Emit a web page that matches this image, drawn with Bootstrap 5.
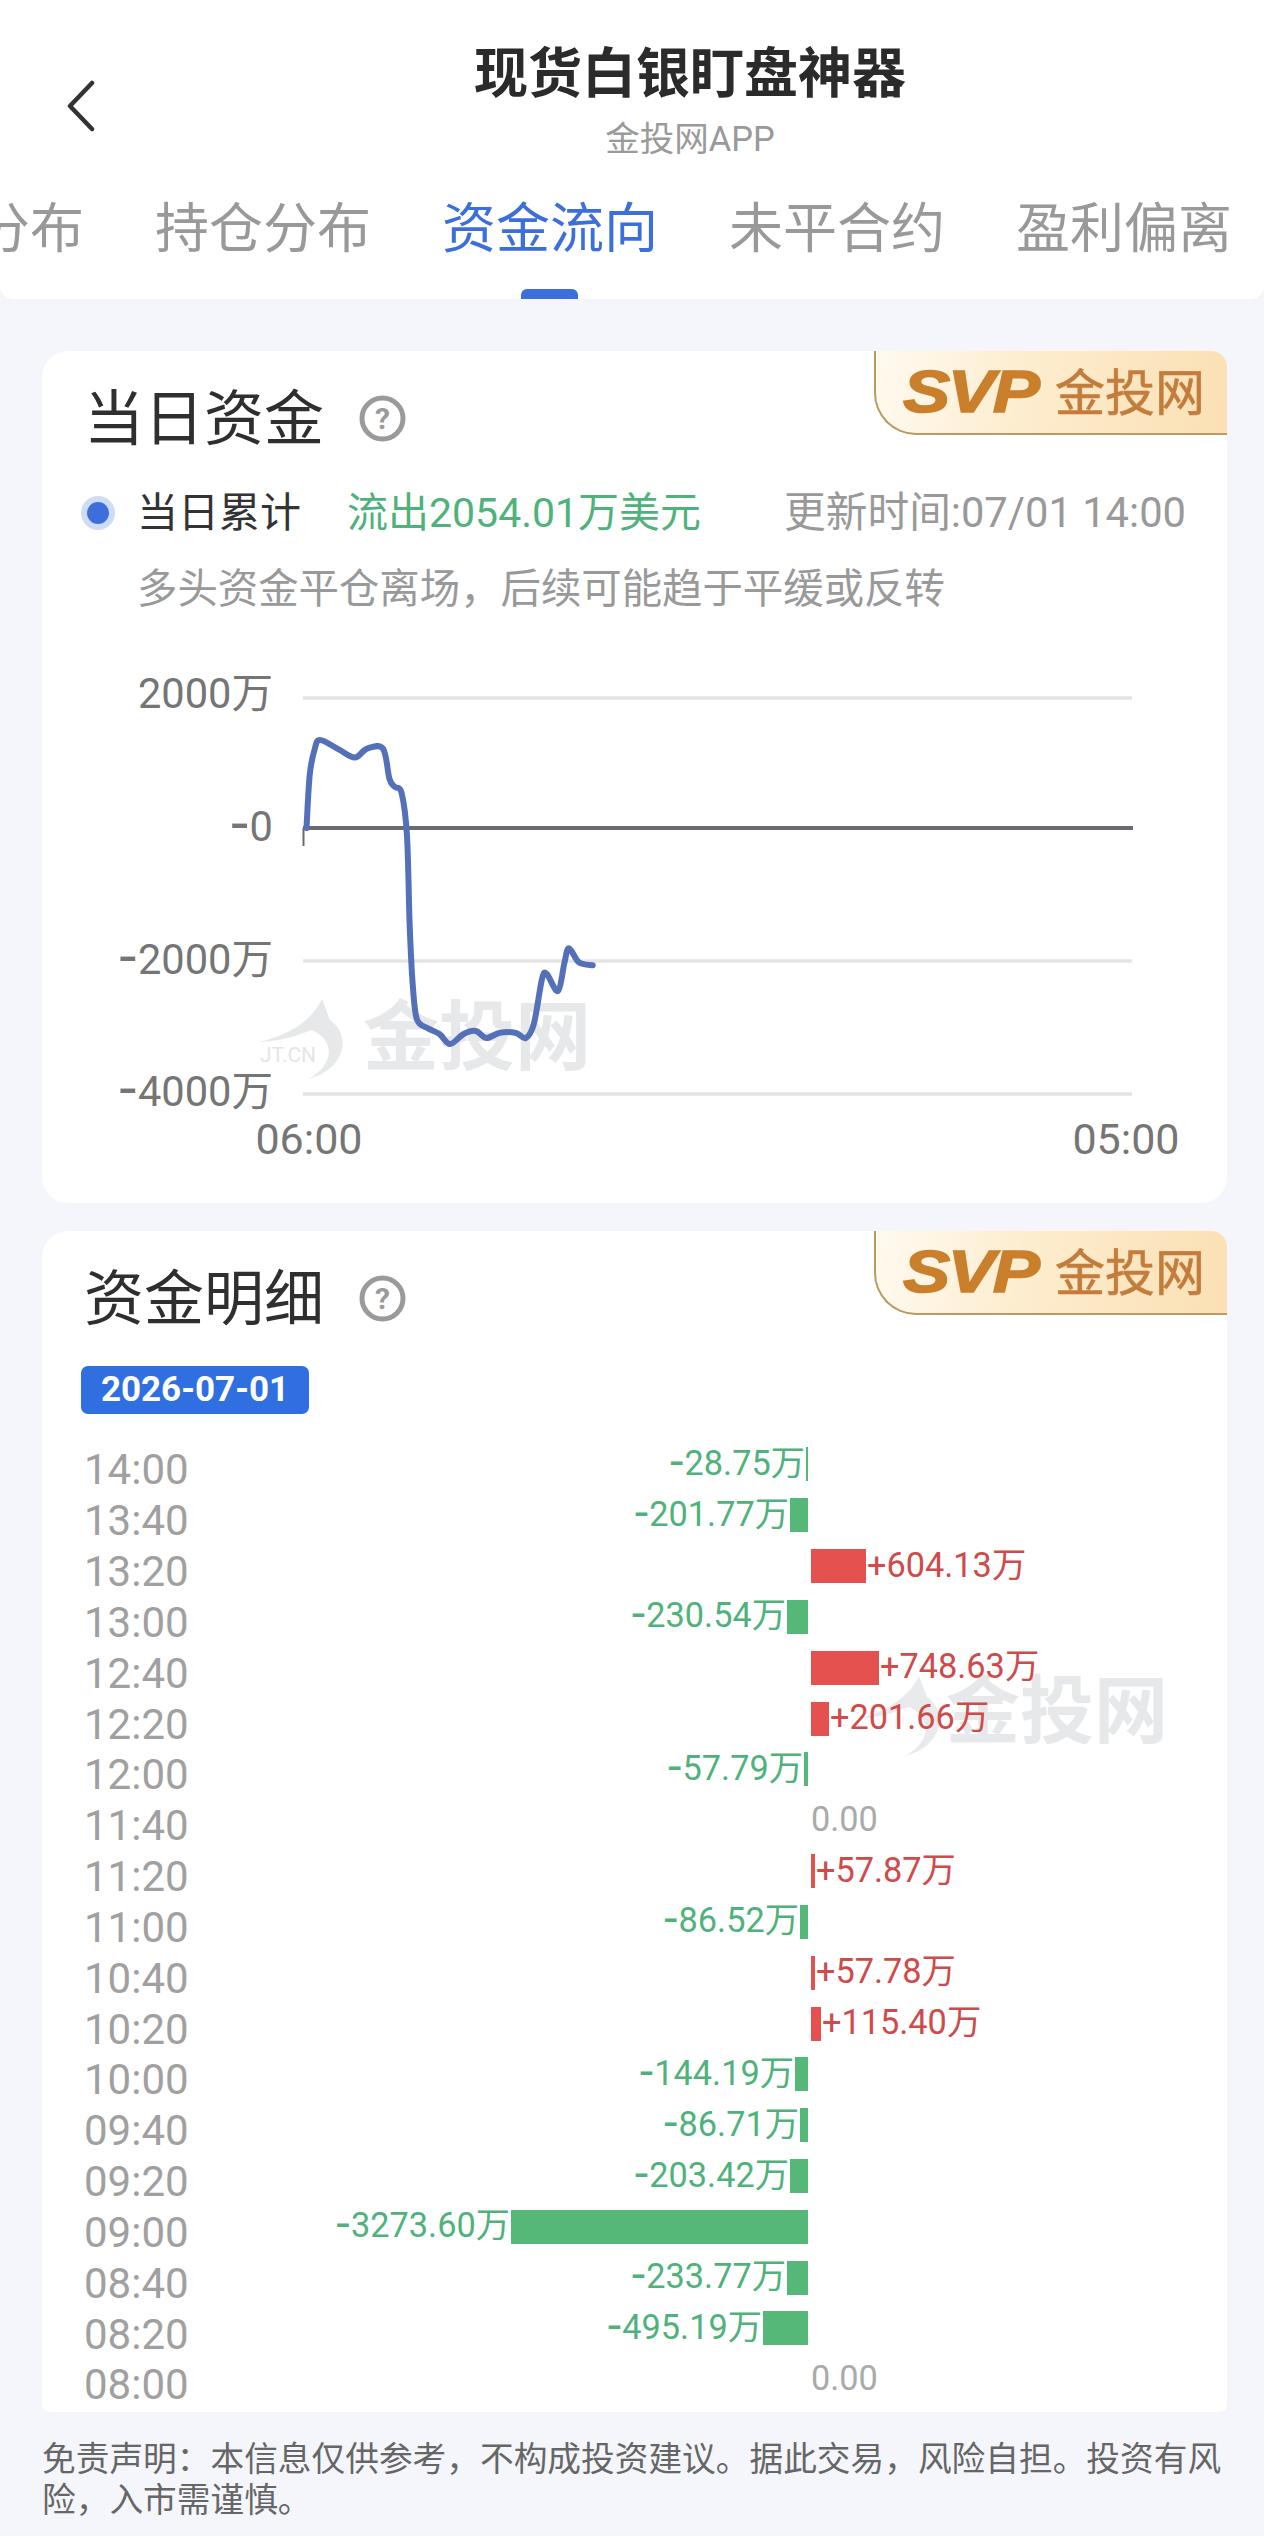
<!DOCTYPE html>
<html lang="zh-CN">
<head>
<meta charset="utf-8">
<title>现货白银盯盘神器</title>
<link href="https://cdn.jsdelivr.net/npm/bootstrap@5.3.0/dist/css/bootstrap.min.css" rel="stylesheet">
<style>
html,body{margin:0;background:#f4f6fc}
body{font-family:Roboto,"Noto Sans CJK SC",sans-serif;color:#333;width:1264px;overflow-x:hidden}
.app-head{background:#fff;height:299px;border-radius:0 0 14px 14px;overflow:hidden}
.head-top{padding:44px 0 0 66px}
.back-ico{width:30px;height:52px;margin-top:7px;flex:none}
.title-block{padding-left:20px}
.app-title{font-size:54px;line-height:62px;font-weight:700;color:#2b2b2b;margin:0}
.app-sub{font-size:34.5px;line-height:44px;color:#9a9a9a;margin-top:11px}
.tab-strip{margin-top:38px;margin-left:-132px;gap:73px;white-space:nowrap}
.tab-item{font-size:54px;line-height:60px;height:100px;color:#999;width:214px;flex:none;text-align:center;padding-top:1px}
.tab-item.on{color:#3d6fdc}
.tab-item.on::after{content:"";position:absolute;left:79px;bottom:0;width:57px;height:10px;background:#3d6fdc;border-radius:6px 6px 0 0}
.sheet{background:#fff;margin:0 37px 0 42px;border-radius:26px}
.sheet-one{margin-top:52px;height:852px}
.sheet-two{margin-top:28px;height:1181px;border-radius:26px 26px 8px 8px}
.sheet-head{padding:32px 0 0 42px;gap:35px}
.sheet-title{font-size:60px;line-height:66px;padding-top:4px;color:#2f2f2f;font-weight:400;margin:0}
.help-ico{width:47px;height:47px;flex:none}
.vip-tag{width:353px;height:84px;border-left:2px solid #bb9a66;border-bottom:2px solid #bb9a66;border-radius:0 16px 0 42px;background:linear-gradient(100deg,#fffaf0 0%,#fdeccd 45%,#fae0b4 100%);padding-left:27px;gap:7px}
.vip-mark{font-family:"Liberation Sans",sans-serif;font-weight:700;font-style:italic;font-size:60px;line-height:1;letter-spacing:-2px;color:#c97f2c;-webkit-text-stroke:1.5px #c97f2c;width:145px;white-space:nowrap;transform:scaleX(1.18);transform-origin:left center}
.vip-name{font-size:50px;line-height:1;color:#c47c3c;white-space:nowrap;padding-top:4px;-webkit-text-stroke:.6px #c47c3c}
.legend-row{margin-top:33px;padding:2px 41px 0 39px;font-size:41px;line-height:50px}
.legend-dot{width:34px;height:34px;border-radius:50%;background:#cfdcf7;flex:none;margin-right:22px}
.legend-dot i{width:22px;height:22px;border-radius:50%;background:#3d6fdc;display:block}
.legend-name{width:164px;margin-right:46px;white-space:nowrap;color:#333}
.legend-flow{color:#4fb27b;white-space:nowrap}
.legend-time{color:#999;margin-left:auto;white-space:nowrap;font-size:41.7px}
.hint-line{margin:27px 0 0 95px;font-size:40.4px;line-height:50px;color:#999;white-space:nowrap}
.flow-chart{display:block;margin-top:35px;width:1185px;height:520px}
.flow-chart text{font-family:Roboto,"Noto Sans CJK SC",sans-serif}
.flow-chart tspan.dash{font-family:"DejaVu Sans",sans-serif;font-size:56px}
.date-pill{margin:33px 0 0 39px;width:228px;height:48px;background:#2f6fe0;color:#fff;font-weight:700;font-size:35px;line-height:48px;text-align:center;border-radius:7px}
.flow-list{margin-top:25px;z-index:1}
.flow-row{height:50.84px}
.flow-when{width:102px;margin-left:42px;text-align:right;font-size:42px;line-height:46px;color:#a0a0a0;padding-top:12px;flex:none;white-space:nowrap}
.flow-neg{width:622px;flex:none;justify-content:flex-end}
.flow-pos{margin-left:3px}
.flow-bar{height:34px;flex:none}
.flow-bar.g{background:#55b878}
.flow-bar.r{background:#e4514f}
.flow-num{font-size:34.3px;line-height:40px;padding-bottom:3px;white-space:nowrap}
.flow-neg .flow-num{color:#4fb27b;margin-right:1px}
.flow-neg .flow-num::first-letter{font-family:"DejaVu Sans",sans-serif;font-size:44px;line-height:30px}
.flow-pos .flow-num{color:#cf4a4a;margin-left:1px}
.flow-pos .flow-num.nil{color:#aaa;margin-left:0}
.mark-two{left:813px;top:411px;width:330px;height:124px}
.fine-print{margin:27px 40px 0 42px;font-size:33.7px;line-height:41px;color:#666}
</style>
</head>
<body>
<header class="app-head">
  <div class="head-top d-flex align-items-center">
    <svg class="back-ico" viewBox="0 0 30 52"><path d="M26 3 4 26l22 23" fill="none" stroke="#333" stroke-width="4.5" stroke-linecap="round" stroke-linejoin="round"/></svg>
    <div class="title-block flex-grow-1 text-center">
      <h1 class="app-title">现货白银盯盘神器</h1>
      <div class="app-sub">金投网APP</div>
    </div>
  </div>
  <nav class="tab-strip d-flex">
    <div class="tab-item">多空分布</div>
    <div class="tab-item">持仓分布</div>
    <div class="tab-item on position-relative">资金流向</div>
    <div class="tab-item">未平合约</div>
    <div class="tab-item">盈利偏离</div>
  </nav>
</header>

<section class="sheet sheet-one position-relative">
  <div class="vip-tag position-absolute top-0 end-0 d-flex align-items-center"><span class="vip-mark">SVP</span><span class="vip-name">金投网</span></div>
  <div class="sheet-head d-flex align-items-center">
    <h2 class="sheet-title">当日资金</h2>
    <svg class="help-ico" viewBox="0 0 47 47"><circle cx="23.5" cy="23.5" r="20.5" fill="none" stroke="#9a9a9a" stroke-width="5"/><text x="23.5" y="34" text-anchor="middle" font-size="30" font-weight="700" fill="#9a9a9a" font-family="Roboto,sans-serif">?</text></svg>
  </div>
  <div class="legend-row d-flex align-items-center">
    <span class="legend-dot d-flex align-items-center justify-content-center"><i></i></span>
    <span class="legend-name">当日累计</span>
    <span class="legend-flow">流出2054.01万美元</span>
    <span class="legend-time">更新时间:07/01 14:00</span>
  </div>
  <div class="hint-line">多头资金平仓离场，后续可能趋于平缓或反转</div>
  <svg class="flow-chart" viewBox="42 650 1185 520">
    <g fill="#e6e8ea">
      <path d="M322 999C312 1020 290 1035 259 1042C285 1041 300 1034 312 1030C335 1040 335 1065 308 1079C345 1070 352 1035 330 1020Z"/>
      <text x="260" y="1062" font-size="21" fill="#e3e5e7">JT.CN</text>
      <text x="363" y="1064" font-size="76" font-weight="700" fill="#e6e8ea">金投网</text>
    </g>
    <g stroke="#e4e4e4" stroke-width="3.5">
      <line x1="303" y1="698" x2="1132" y2="698"/>
      <line x1="303" y1="961" x2="1132" y2="961"/>
      <line x1="303" y1="1094" x2="1132" y2="1094"/>
    </g>
    <line x1="303" y1="828" x2="1133" y2="828" stroke="#686b6f" stroke-width="4"/>
    <line x1="303.5" y1="828" x2="303.5" y2="846" stroke="#686b6f" stroke-width="2"/>
    <path id="flowLine" fill="none" stroke="#5470b8" stroke-width="6" stroke-linejoin="round" stroke-linecap="round" data-pts="306.5 828 309.7 775 314.5 750 320 740 338.7 749.4 354.8 757.6 367 748.6 383 748.6 389.5 779 395 787 401.6 793 407 836 409.7 926 412.9 987 417 1019.6 427.4 1028 439.5 1034 450 1044 463.7 1034 475.8 1031 486.3 1038 500 1032.7 516 1033 525.8 1038 533.9 1023.7 542 979 546.8 974 558 991 564.5 962.4 569 948.2 579 962.4 592.7 965.3" d="M306.5 828 309.7 775 314.5 750 320 740 338.7 749.4 354.8 757.6 367 748.6 383 748.6 389.5 779 395 787 401.6 793 407 836 409.7 926 412.9 987 417 1019.6 427.4 1028 439.5 1034 450 1044 463.7 1034 475.8 1031 486.3 1038 500 1032.7 516 1033 525.8 1038 533.9 1023.7 542 979 546.8 974 558 991 564.5 962.4 569 948.2 579 962.4 592.7 965.3"/>
    <g font-size="41.6" fill="#757575" text-anchor="end">
      <text x="273" y="708">2000万</text>
      <text x="273" y="841"><tspan class="dash">-</tspan>0</text>
      <text x="273" y="974"><tspan class="dash">-</tspan>2000万</text>
      <text x="273" y="1106"><tspan class="dash">-</tspan>4000万</text>
    </g>
    <g font-size="43" fill="#757575" text-anchor="middle">
      <text x="309" y="1154">06:00</text>
      <text x="1126" y="1154">05:00</text>
    </g>
  </svg>
</section>

<section class="sheet sheet-two position-relative">
  <div class="vip-tag position-absolute top-0 end-0 d-flex align-items-center"><span class="vip-mark">SVP</span><span class="vip-name">金投网</span></div>
  <div class="sheet-head d-flex align-items-center">
    <h2 class="sheet-title">资金明细</h2>
    <svg class="help-ico" viewBox="0 0 47 47"><circle cx="23.5" cy="23.5" r="20.5" fill="none" stroke="#9a9a9a" stroke-width="5"/><text x="23.5" y="34" text-anchor="middle" font-size="30" font-weight="700" fill="#9a9a9a" font-family="Roboto,sans-serif">?</text></svg>
  </div>
  <div class="date-pill">2026-07-01</div>
  <svg class="mark-two position-absolute" viewBox="258 965 330 124">
    <path fill="#e8eaeb" d="M322 999C312 1020 290 1035 259 1042C285 1041 300 1034 312 1030C335 1040 335 1065 308 1079C345 1070 352 1035 330 1020Z"/>
    <text x="349" y="1060" font-size="74" font-weight="700" fill="#e6e8ea" font-family="Noto Sans CJK SC,sans-serif">金投网</text>
  </svg>
  <div class="flow-list position-relative" id="flowList">
    <div class="flow-row d-flex align-items-center"><div class="flow-when">14:00</div><div class="flow-neg d-flex align-items-center"><span class="flow-num">-28.75万</span><div class="flow-bar g" style="width:2px"></div></div></div>
    <div class="flow-row d-flex align-items-center"><div class="flow-when">13:40</div><div class="flow-neg d-flex align-items-center"><span class="flow-num">-201.77万</span><div class="flow-bar g" style="width:18px"></div></div></div>
    <div class="flow-row d-flex align-items-center"><div class="flow-when">13:20</div><div class="flow-neg"></div><div class="flow-pos d-flex align-items-center"><div class="flow-bar r" style="width:55px"></div><span class="flow-num">+604.13万</span></div></div>
    <div class="flow-row d-flex align-items-center"><div class="flow-when">13:00</div><div class="flow-neg d-flex align-items-center"><span class="flow-num">-230.54万</span><div class="flow-bar g" style="width:21px"></div></div></div>
    <div class="flow-row d-flex align-items-center"><div class="flow-when">12:40</div><div class="flow-neg"></div><div class="flow-pos d-flex align-items-center"><div class="flow-bar r" style="width:68px"></div><span class="flow-num">+748.63万</span></div></div>
    <div class="flow-row d-flex align-items-center"><div class="flow-when">12:20</div><div class="flow-neg"></div><div class="flow-pos d-flex align-items-center"><div class="flow-bar r" style="width:18px"></div><span class="flow-num">+201.66万</span></div></div>
    <div class="flow-row d-flex align-items-center"><div class="flow-when">12:00</div><div class="flow-neg d-flex align-items-center"><span class="flow-num">-57.79万</span><div class="flow-bar g" style="width:4px"></div></div></div>
    <div class="flow-row d-flex align-items-center"><div class="flow-when">11:40</div><div class="flow-neg"></div><div class="flow-pos d-flex align-items-center"><span class="flow-num nil">0.00</span></div></div>
    <div class="flow-row d-flex align-items-center"><div class="flow-when">11:20</div><div class="flow-neg"></div><div class="flow-pos d-flex align-items-center"><div class="flow-bar r" style="width:4px"></div><span class="flow-num">+57.87万</span></div></div>
    <div class="flow-row d-flex align-items-center"><div class="flow-when">11:00</div><div class="flow-neg d-flex align-items-center"><span class="flow-num">-86.52万</span><div class="flow-bar g" style="width:8px"></div></div></div>
    <div class="flow-row d-flex align-items-center"><div class="flow-when">10:40</div><div class="flow-neg"></div><div class="flow-pos d-flex align-items-center"><div class="flow-bar r" style="width:4px"></div><span class="flow-num">+57.78万</span></div></div>
    <div class="flow-row d-flex align-items-center"><div class="flow-when">10:20</div><div class="flow-neg"></div><div class="flow-pos d-flex align-items-center"><div class="flow-bar r" style="width:10px"></div><span class="flow-num">+115.40万</span></div></div>
    <div class="flow-row d-flex align-items-center"><div class="flow-when">10:00</div><div class="flow-neg d-flex align-items-center"><span class="flow-num">-144.19万</span><div class="flow-bar g" style="width:13px"></div></div></div>
    <div class="flow-row d-flex align-items-center"><div class="flow-when">09:40</div><div class="flow-neg d-flex align-items-center"><span class="flow-num">-86.71万</span><div class="flow-bar g" style="width:8px"></div></div></div>
    <div class="flow-row d-flex align-items-center"><div class="flow-when">09:20</div><div class="flow-neg d-flex align-items-center"><span class="flow-num">-203.42万</span><div class="flow-bar g" style="width:18px"></div></div></div>
    <div class="flow-row d-flex align-items-center"><div class="flow-when">09:00</div><div class="flow-neg d-flex align-items-center"><span class="flow-num">-3273.60万</span><div class="flow-bar g" style="width:297px"></div></div></div>
    <div class="flow-row d-flex align-items-center"><div class="flow-when">08:40</div><div class="flow-neg d-flex align-items-center"><span class="flow-num">-233.77万</span><div class="flow-bar g" style="width:21px"></div></div></div>
    <div class="flow-row d-flex align-items-center"><div class="flow-when">08:20</div><div class="flow-neg d-flex align-items-center"><span class="flow-num">-495.19万</span><div class="flow-bar g" style="width:45px"></div></div></div>
    <div class="flow-row d-flex align-items-center"><div class="flow-when">08:00</div><div class="flow-neg"></div><div class="flow-pos d-flex align-items-center"><span class="flow-num nil">0.00</span></div></div>
  </div>
</section>

<p class="fine-print mb-0">免责声明：本信息仅供参考，不构成投资建议。据此交易，风险自担。投资有风险，入市需谨慎。</p>

<script src="https://cdn.jsdelivr.net/npm/bootstrap@5.3.0/dist/js/bootstrap.bundle.min.js"></script>
<script>
/* smooth the money-flow line through its data points (Catmull-Rom to Bezier) */
(function(){
  var el=document.getElementById('flowLine'),n=el.getAttribute('data-pts').split(' ').map(Number),p=[];
  for(var i=0;i<n.length;i+=2)p.push([n[i],n[i+1]]);
  var d='M'+p[0].join(' ');
  for(i=0;i<p.length-1;i++){
    var a=p[i-1]||p[i],b=p[i],c=p[i+1],e=p[i+2]||c;
    d+='C'+(b[0]+(c[0]-a[0])/6)+' '+(b[1]+(c[1]-a[1])/6)+' '+(c[0]-(e[0]-b[0])/6)+' '+(c[1]-(e[1]-b[1])/6)+' '+c[0]+' '+c[1];
  }
  el.setAttribute('d',d);
})();
</script>
</body>
</html>
